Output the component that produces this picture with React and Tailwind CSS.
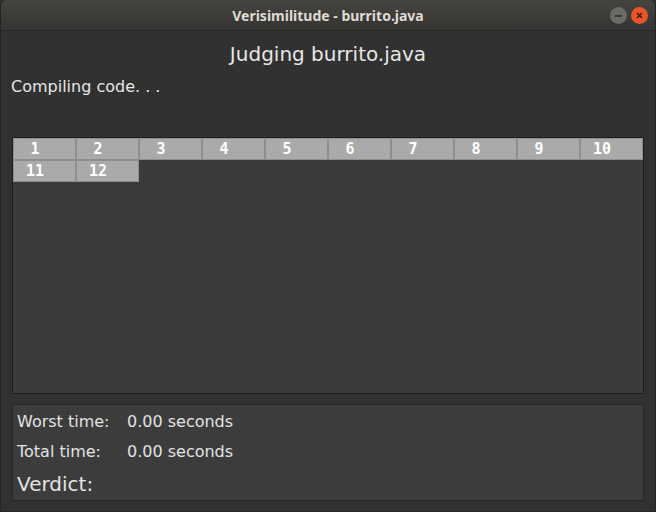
export default function App() {
  const nums = [1, 2, 3, 4, 5, 6, 7, 8, 9, 10, 11, 12];
  return (
    <div className="w-[656px] h-[512px] bg-[#2b2b2b] overflow-hidden" style={{ fontFamily: '"DejaVu Sans", sans-serif' }}>
      <div className="w-[656px] h-[512px] rounded-t-[6px] overflow-hidden flex flex-col bg-[#313131] border-x border-b border-[#252525]">
        <div className="h-[31px] shrink-0 flex items-center justify-center relative bg-gradient-to-b from-[#45443f] to-[#353432] border-b border-[#282826]">
          <span className="text-[14px] font-bold text-[#dfdbd2]" style={{ fontFamily: '"Noto Sans", sans-serif' }}>Verisimilitude - burrito.java</span>
          <div className="absolute right-[7px] top-[7px] flex gap-[4px]">
            <div className="w-[17px] h-[17px] rounded-full bg-[#6b6a66] flex items-center justify-center">
              <div className="w-[7px] h-[2px] bg-[#3a3936]" />
            </div>
            <div className="w-[17px] h-[17px] rounded-full bg-[#e9552b] flex items-center justify-center">
              <svg width="7" height="7" viewBox="0 0 7 7"><path d="M1 1L6 6M6 1L1 6" stroke="#3a1a10" strokeWidth="1.4" /></svg>
            </div>
          </div>
        </div>
        <div className="flex-1 flex flex-col px-[11px]">
          <div className="text-center text-[20px] text-[#e6e6e6] leading-[24px] mt-[11px]">Judging burrito.java</div>
          <div className="text-[16px] text-[#e6e6e6] leading-[20px] mt-[11px] -ml-[1px]">Compiling code. . .</div>
          <div className="mt-[40px] h-[257px] border border-[#1f1f1f] bg-[#3b3b3b]">
            <div className="grid grid-cols-10">
              {nums.map((n) => (
                <div key={n} className="h-[22px] bg-[#aaaaaa] border border-[#8e8e8e] flex items-center text-[15px] font-bold text-white" style={{ fontFamily: '"DejaVu Sans Mono", monospace' }}>
                  <span className="w-[42px] text-center">{n}</span>
                </div>
              ))}
            </div>
          </div>
          <div className="mt-[10px] h-[97px] border border-[#262626] bg-[#3c3c3c] px-[4px] pt-[6px] flex flex-col text-[#e3e3e3]">
            <div className="flex text-[16px] leading-[22px]">
              <span className="w-[110px]">Worst time:</span>
              <span>0.00 seconds</span>
            </div>
            <div className="flex text-[16px] leading-[22px] mt-[8px]">
              <span className="w-[110px]">Total time:</span>
              <span>0.00 seconds</span>
            </div>
            <div className="text-[20px] leading-[24px] mt-[9px]">Verdict:</div>
          </div>
        </div>
      </div>
    </div>
  );
}
